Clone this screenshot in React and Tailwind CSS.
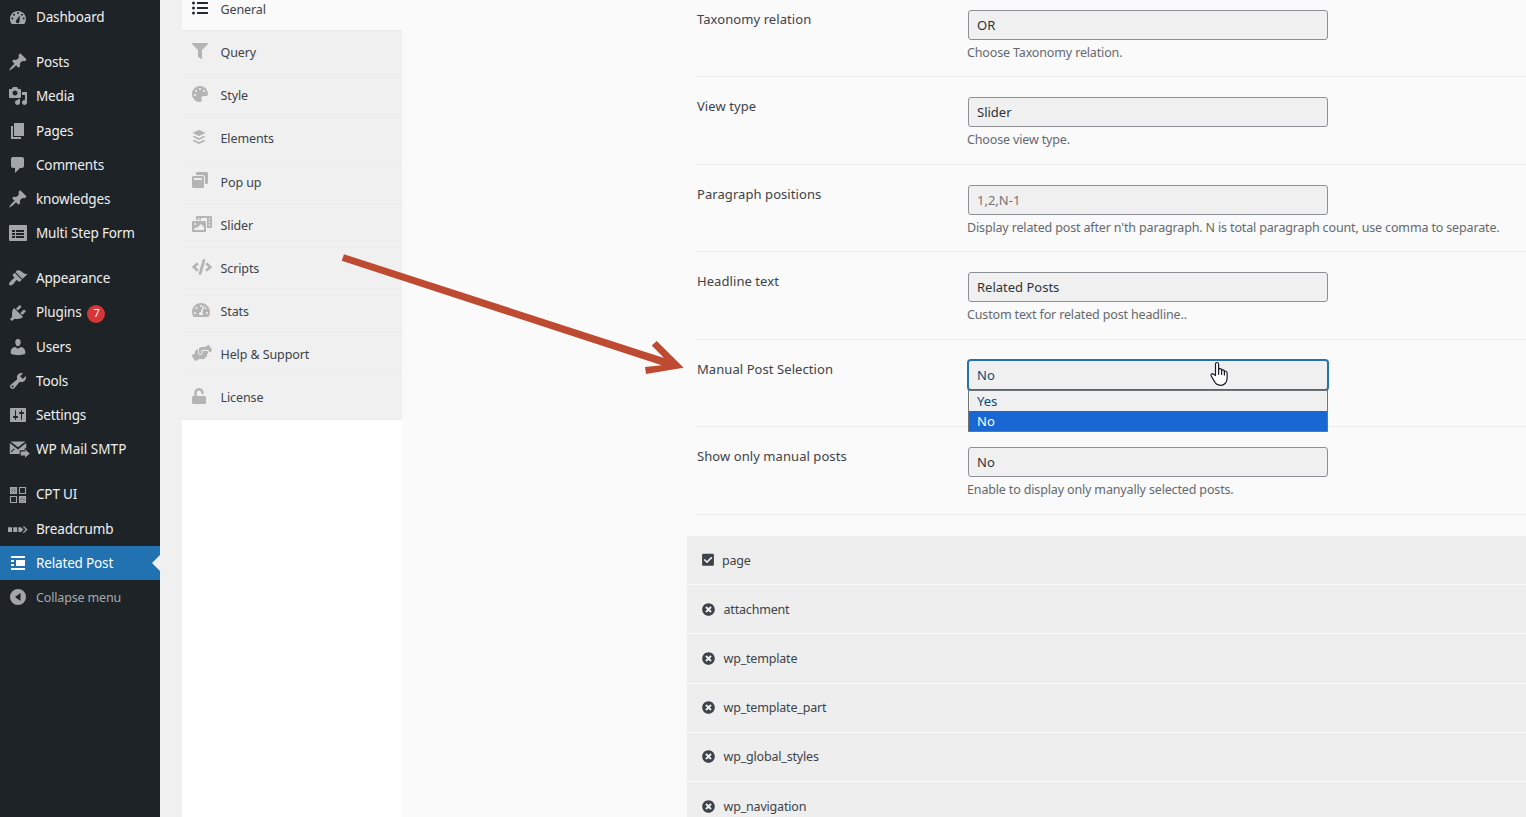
import React from "react";
import {
  FaListUl, FaFilter, FaPalette, FaBuffer, FaWindowRestore, FaPhotoVideo, FaCode,
  FaTachometerAlt, FaHandsHelping, FaUnlock, FaCheckSquare, FaTimesCircle,
} from "react-icons/fa";

const GLYPHS = {
  dashboard: "M3.76 17h12.48A7.96 7.96 0 0 0 18 12c0-4.42-3.58-8-8-8s-8 3.58-8 8c0 1.89.66 3.63 1.76 5zM10 5a1 1 0 1 1 0 2 1 1 0 0 1 0-2zM6 6.7a1 1 0 1 1 0 2 1 1 0 0 1 0-2zM14 6.7a1 1 0 1 1 0 2 1 1 0 0 1 0-2zM4.3 10.5a1 1 0 1 1 0 2 1 1 0 0 1 0-2zM15.7 10.5a1 1 0 1 1 0 2 1 1 0 0 1 0-2zM11.9 8.2l-.4 5.4a1.9 1.9 0 1 1-2.9-.9z",
  pin: "M10.44 3.02l1.82-1.82 6.36 6.35-1.83 1.82c-1.05-.68-2.48-.57-3.41.36l-.75.75c-.92.93-1.04 2.35-.35 3.41l-1.83 1.82-2.41-2.41-2.8 2.79c-.42.42-3.38 2.71-3.8 2.29s1.86-3.39 2.28-3.81l2.79-2.79L4.1 9.36l1.83-1.82c1.05.69 2.48.57 3.4-.36l.75-.75c.93-.92 1.05-2.35.36-3.41z",
  media: "M13 11V4c0-.55-.45-1-1-1h-1.67L9 1H5L3.67 3H2c-.55 0-1 .45-1 1v7c0 .55.45 1 1 1h10c.55 0 1-.45 1-1zM7 4.5c1.38 0 2.5 1.12 2.5 2.5S8.38 9.5 7 9.5 4.5 8.38 4.5 7 5.62 4.5 7 4.5zM14 6h5v10.5c0 1.38-1.12 2.5-2.5 2.5S14 17.88 14 16.5s1.12-2.5 2.5-2.5c.17 0 .34.02.5.05V9h-3V6zm-4 8.05V13h2v3.5c0 1.38-1.12 2.5-2.5 2.5S7 17.88 7 16.5 8.12 14 9.5 14c.17 0 .34.02.5.05z",
  page: "M6 15V2h10v13H6zm-1 1h8v2H3V5h2v11z",
  comment: "M5 2h9c1.1 0 2 .9 2 2v7c0 1.1-.9 2-2 2h-2l-5 5v-5H5c-1.1 0-2-.9-2-2V4c0-1.1.9-2 2-2z",
  form: "M2 2h16c.55 0 1 .45 1 1v14c0 .55-.45 1-1 1H2c-.55 0-1-.45-1-1V3c0-.55.45-1 1-1zM4 7v2h3V7zM8 7v2h8V7zM4 10v2h3v-2zM8 10v2h8v-2zM4 13v2h3v-2zM8 13v2h8v-2z",
  brush: "M14.48 11.06L7.41 3.99l1.5-1.5c.5-.56 2.3-.47 3.51.32 1.21.8 1.43 1.28 2.91 2.1 1.18.64 2.45 1.26 4.45.85zm-.71.71L6.7 4.7 4.93 6.47c-.39.39-.39 1.02 0 1.41l1.06 1.06c.39.39.39 1.03 0 1.42-.6.6-1.43 1.11-2.21 1.69-.35.26-.7.53-1.01.84C1.43 14.23.4 16.08 1.4 17.07c.99 1 2.84-.03 4.18-1.36.31-.31.58-.66.85-1.02.57-.78 1.08-1.61 1.69-2.21.39-.39 1.02-.39 1.41 0l1.06 1.06c.39.39 1.02.39 1.41 0z",
  plug: "M13.11 4.36L9.87 7.6 8 5.73l3.24-3.24c.35-.34 1.05-.2 1.56.32.52.51.66 1.21.31 1.55zm-8 1.77l.91-1.12 9.01 9.01-1.19.84c-.71.71-2.63 1.16-3.82 1.16H6.14L4.9 17.26c-.59.59-1.54.59-2.12 0-.59-.58-.59-1.53 0-2.12l1.24-1.24v-3.88c0-1.13.4-3.19 1.09-3.89zm7.26 3.97l3.24-3.24c.34-.35 1.04-.21 1.55.31.52.51.66 1.21.31 1.55l-3.24 3.25z",
  user: "M10 9.25c-2.27 0-2.73-3.44-2.73-3.44C7 4.02 7.82 2 9.97 2c2.16 0 2.98 2.02 2.71 3.81 0 0-.41 3.44-2.68 3.44zm0 2.57L12.72 10c2.39 0 4.52 2.33 4.52 4.53v2.49s-3.65 1.13-7.24 1.13c-3.65 0-7.24-1.13-7.24-1.13v-2.49c0-2.25 1.94-4.48 4.47-4.48z",
  wrench: "M16.68 9.77c-1.34 1.34-3.3 1.67-4.95.99l-5.41 6.52c-.99.99-2.59.99-3.58 0s-.99-2.59 0-3.57l6.52-5.42c-.68-1.65-.35-3.61.99-4.95 1.28-1.28 3.12-1.62 4.72-1.06l-2.89 2.89 2.82 2.82 2.86-2.87c.53 1.58.18 3.39-1.08 4.65zM3.81 16.21c.4.39 1.04.39 1.43 0 .4-.4.4-1.04 0-1.43-.39-.4-1.03-.4-1.43 0-.39.39-.39 1.03 0 1.43z",
  sliders: "M18 16V4c0-.55-.45-1-1-1H3c-.55 0-1 .45-1 1v12c0 .55.45 1 1 1h14c.55 0 1-.45 1-1zM8 11h1c.55 0 1 .45 1 1s-.45 1-1 1H8v1.5c0 .28-.22.5-.5.5s-.5-.22-.5-.5V13H6c-.55 0-1-.45-1-1s.45-1 1-1h1V5.5c0-.28.22-.5.5-.5s.5.22.5.5V11zm5-2h-1c-.55 0-1-.45-1-1s.45-1 1-1h1V5.5c0-.28.22-.5.5-.5s.5.22.5.5V7h1c.55 0 1 .45 1 1s-.45 1-1 1h-1v5.5c0 .28-.22.5-.5.5s-.5-.22-.5-.5V9z",
  mail: "M2.6 2.5h14.8L10 8.3zM1.8 3.9L10 10.4l8.2-6.5V9.8l-1.5-1.2v2.6h-5V15H1.8zM3 13.6l3.8-3.4-.9-.8L3 12.2zM12.7 12.5h4.4v-2.1l4.6 4.1-4.6 4.2v-2.1h-4.4z",
  crumbs: "M0 8.2h4v4.8H0zM5.2 8.2h4v4.8h-4zM10.4 8.2h2.6l2.3 2.4-2.3 2.4h-2.6zM14.5 7.5h1.8l3.3 3.1-3.3 3.2h-1.8l3.1-3.2z",
  related: "M3 3h14v2H3zM3 7h3v2H3zM3 11h3v2H3zM8 7h9v6H8zM3 15h14v2H3z",
  collapse: "M10 2a8 8 0 1 1 0 16 8 8 0 0 1 0-16zM12.5 6L7 10l5.5 4z",
};

function Glyph({ name }) {
  return (
    <svg viewBox="0 0 20 20" className="block h-5 w-5 shrink-0 overflow-visible" fill="currentColor" fillRule="evenodd">
      {name === "grid" ? (
        <g fill="none" stroke="currentColor" strokeWidth="1.1">
          <path d="M2.5 2.5h6v6h-6zM11.5 2.5h6v6h-6zM2.5 11.5h6v6h-6zM11.5 11.5h6v6h-6zM2.8 2.8l5.4 5.4M8.2 2.8L2.8 8.2M11.8 11.8l5.4 5.4M17.2 11.8l-5.4 5.4" />
          <circle cx="5.5" cy="5.5" r="1.9" />
          <circle cx="14.5" cy="14.5" r="1.9" />
        </g>
      ) : (
        <path d={GLYPHS[name]} />
      )}
    </svg>
  );
}

const MENU = [
  [["dashboard", "Dashboard"]],
  [["pin", "Posts"], ["media", "Media"], ["page", "Pages"], ["comment", "Comments"], ["pin", "knowledges"], ["form", "Multi Step Form"]],
  [["brush", "Appearance"], ["plug", "Plugins"], ["user", "Users"], ["wrench", "Tools"], ["sliders", "Settings"], ["mail", "WP Mail SMTP"]],
  [["grid", "CPT UI"], ["crumbs", "Breadcrumb"], ["related", "Related Post"], ["collapse", "Collapse menu"]],
];

function AdminMenu() {
  return (
    <nav className="flex h-full w-40 shrink-0 flex-col gap-[11px] bg-[#1d2327] text-[13.5px] tracking-[-0.16px]">
      {MENU.map((group, i) => (
        <ul key={i}>
          {group.map(([icon, label]) => {
            const active = icon === "related";
            const muted = icon === "collapse";
            return (
              <li
                key={label}
                className={
                  "relative flex h-[34.2px] items-center pl-2 " +
                  (active ? "bg-[#2271b1] text-white" : muted ? "text-[12.5px] text-[#a7aaad]" : "text-[#f0f0f1]")
                }
              >
                <span className={"mr-2 " + (active ? "text-white" : "text-[#a2a6aa]")}><Glyph name={icon} /></span>
                <span className={"whitespace-nowrap " + (muted ? "pt-0.5" : icon === "mail" ? "tracking-[0.04px]" : "")}>{label}</span>
                {icon === "plug" && (
                  <span className="mt-0.5 ml-1.5 flex h-[18px] w-[18px] items-center justify-center rounded-full bg-[#d63638] text-[11px] text-white">7</span>
                )}
                {active && (
                  <span className="absolute top-[9px] right-0 border-y-8 border-r-8 border-y-transparent border-r-[#f0f0f1]" />
                )}
              </li>
            );
          })}
        </ul>
      ))}
    </nav>
  );
}

const TABS = [
  [FaListUl, "General", "w-4"],
  [FaFilter, "Query", "w-4"],
  [FaPalette, "Style", "w-4"],
  [FaBuffer, "Elements", "w-3.5"],
  [FaWindowRestore, "Pop up", "w-4"],
  [FaPhotoVideo, "Slider", "w-5"],
  [FaCode, "Scripts", "w-5"],
  [FaTachometerAlt, "Stats", "w-[18px]"],
  [FaHandsHelping, "Help & Support", "w-5"],
  [FaUnlock, "License", "w-3.5"],
];

function Tabs() {
  return (
    <div className="h-full w-[220px] shrink-0 bg-white">
      <ul className="-mt-[11.69px] text-[12.5px] tracking-[-0.1px] text-[#3c434a]">
        {TABS.map(([Icon, label, width], i) => (
          <li
            key={label}
            className={"flex h-[43.14px] items-center border-b border-[#ececec] pl-2.5 " + (i === 0 ? "bg-[#fafafa]" : "bg-[#f0f0f0]")}
          >
            <span className={"flex w-[28.5px] pb-[3px] " + (i === 0 ? "text-[#23282d]" : "text-[#b4b4b4]")}>
              <Icon className={"h-4 shrink-0 " + width} />
            </span>
            <span className="pt-0.5">{label}</span>
          </li>
        ))}
      </ul>
    </div>
  );
}

const FIELDS = [
  ["Taxonomy relation", "OR", "Choose Taxonomy relation."],
  ["View type", "Slider", "Choose view type."],
  ["Paragraph positions", "1,2,N-1", "Display related post after n'th paragraph. N is total paragraph count, use comma to separate."],
  ["Headline text", "Related Posts", "Custom text for related post headline.."],
  ["Manual Post Selection", "No", ""],
  ["Show only manual posts", "No", "Enable to display only manyally selected posts."],
];

function Pointer() {
  return (
    <svg className="absolute top-[1px] left-[242px] h-[26px] w-[18px]" viewBox="0 0 18 26">
      <path
        d="M5.5 14.5V3.2c0-2.3 3.1-2.3 3.1 0v5.6c.3-1.7 2.9-1.5 3 .3v.6c.5-1.3 2.6-1 2.8.5v.7c.6-1.1 2.5-.8 2.7.8v5.6c0 3.9-2.6 7-6.6 7-3.4 0-5-1.5-6.3-4.2L1.3 15c-.9-2 1-3 2.3-1.7z"
        fill="#fff" stroke="#1b1b2a" strokeWidth="1.2" strokeLinejoin="round"
      />
      <path d="M8.6 8.5v4.8M11.6 9.5v4M14.4 11v3" stroke="#1b1b2a" strokeWidth="1.2" strokeLinecap="round" />
    </svg>
  );
}

function Field({ label, value, hint }) {
  const open = label === "Manual Post Selection";
  const placeholder = value === "1,2,N-1";
  return (
    <div className="ml-[9px] flex h-[87.5px] border-b border-[#ececec] pt-5">
      <div className="-mt-px w-[272px] pl-px text-[13px] leading-5 tracking-[0.07px] text-[#3c434a]">{label}</div>
      <div className="relative">
        <div
          className={
            "flex h-[30px] w-[360px] items-center rounded-[3px] border bg-[#f0f0f0] pt-0.5 pl-2 text-[13px] " +
            (open ? "border-[#2271b1] text-[#0a4b78] ring-1 ring-[#2271b1]" : placeholder ? "border-[#8c8f94] text-[#757575]" : "border-[#8c8f94] text-[#2c3338]")
          }
        >
          {value}
        </div>
        {hint && <p className="-ml-px pt-[3px] text-[12.5px] leading-[19px] tracking-[-0.15px] whitespace-nowrap text-[#646970]">{hint}</p>}
        {open && (
          <>
            <ul className="absolute top-[30px] left-0 z-10 w-[360px] border border-[#70757a] bg-[#f0f0f0] text-[13px] leading-5">
              <li className="h-5 pl-2 text-[#0a4b78]">Yes</li>
              <li className="h-5 bg-[#1967d2] pl-2 text-white">No</li>
            </ul>
            <Pointer />
          </>
        )}
      </div>
    </div>
  );
}

const TYPES = ["page", "attachment", "wp_template", "wp_template_part", "wp_global_styles", "wp_navigation"];

export default function App() {
  return (
    <div className="relative flex h-[817px] w-[1526px] overflow-hidden bg-[#f0f0f1] font-['Noto_Sans','Open_Sans',sans-serif]">
      <AdminMenu />
      <main className="ml-[22px] flex min-w-0 flex-1">
        <Tabs />
        <section className="flex-1 bg-[#fafafa] pl-[285px]">
          <div className="-mt-[10.5px]">
            {FIELDS.map(([label, value, hint]) => (
              <Field key={label} label={label} value={value} hint={hint} />
            ))}
          </div>
          <ul className="mt-[21.5px] text-[12.5px] tracking-[-0.18px] text-[#3c434a]">
            {TYPES.map((t) => (
              <li key={t} className="flex h-[49.2px] items-center border-b border-[#fafafa] bg-[#eee] pl-[15px]">
                {t === "page" ? <FaCheckSquare className="mr-2 h-[13.5px] w-[12px]" /> : <FaTimesCircle className="mr-[8.5px] h-[13px] w-[13px]" />}
                <span className="pt-0.5">{t}</span>
              </li>
            ))}
          </ul>
        </section>
      </main>
      <svg className="pointer-events-none absolute top-0 left-0 h-[817px] w-[1526px]" viewBox="0 0 1526 817">
        <path d="M344 254.300L664 358 651.700 345.500l5-4.500 26.900 26.700L646 374l-1-7 16.700-1.800L341.700 260.700z" fill="#be4a31" />
      </svg>
    </div>
  );
}
